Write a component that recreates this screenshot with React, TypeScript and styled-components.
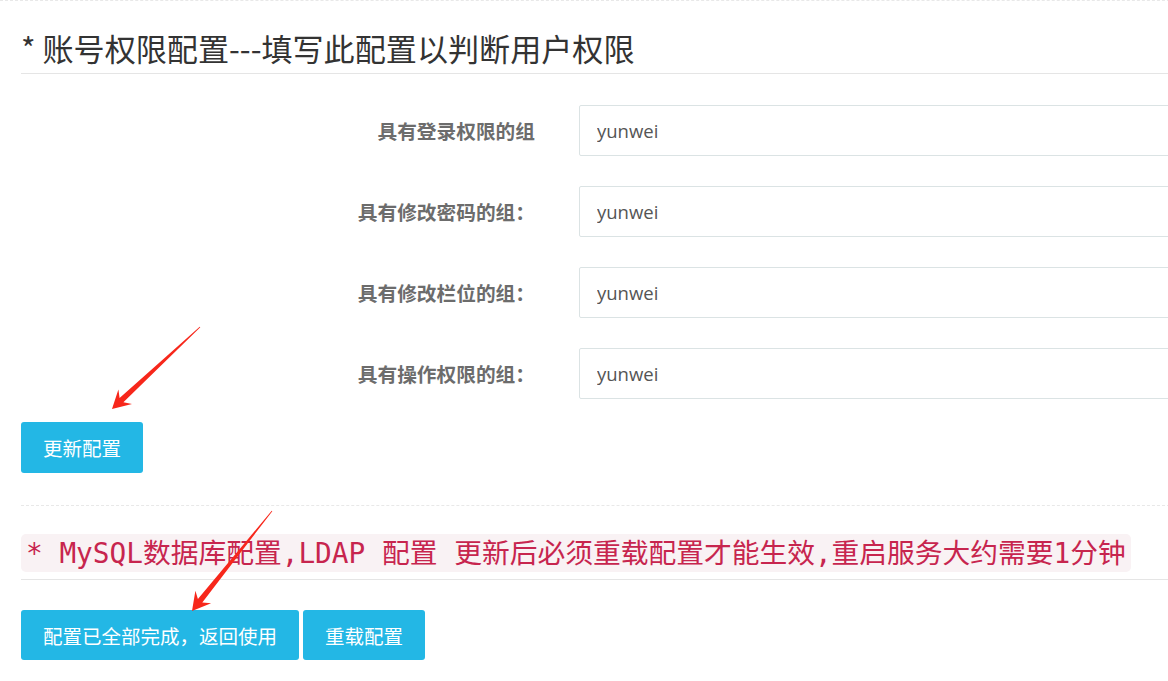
import React from "react";
import styled, { createGlobalStyle } from "styled-components";

const GlobalStyle = createGlobalStyle`
  html, body {
    margin: 0;
    padding: 0;
    background: #ffffff;
    overflow: hidden;
  }
  body {
    font-family: "Noto Sans CJK SC", "Noto Sans", sans-serif;
    color: #333333;
  }
  * { box-sizing: border-box; }
`;

const Page = styled.div`
  position: relative;
  width: 1200px;
  min-height: 681px;
`;

const TopRule = styled.div`
  border-top: 1px dashed #e8e8e8;
`;

const Content = styled.div`
  padding-left: 21px;
`;

const SectionTitle = styled.h3`
  margin: 30px 0 0;
  padding-bottom: 8px;
  font-size: 31.1px;
  line-height: 34px;
  font-weight: 400;
  color: #333333;
  border-bottom: 1px solid #e5e5e5;
`;

const Form = styled.div`
  display: flex;
  flex-direction: column;
  gap: 30px;
  margin-top: 31px;
`;

const Row = styled.div`
  display: grid;
  grid-template-columns: 514px 1fr;
  column-gap: 44px;
  align-items: center;
`;

const Label = styled.label`
  text-align: right;
  font-size: 19.7px;
  font-weight: 700;
  color: #6c6c6c;
  line-height: 24px;
  white-space: nowrap;
`;

const Input = styled.input`
  display: block;
  width: 100%;
  height: 51px;
  padding: 0 17px;
  border: 1px solid #dbe3e4;
  border-radius: 2px;
  font-family: "Open Sans", "Noto Sans", sans-serif;
  font-size: 18.5px;
  color: #555555;
  background: #ffffff;
  outline: none;
`;

const ButtonBar = styled.div<{ $top: number }>`
  display: flex;
  gap: 4px;
  margin-top: ${(p) => p.$top}px;
`;

const Button = styled.button<{ $h?: number }>`
  height: ${(p) => p.$h ?? 50}px;
  padding: 0 22px;
  border: none;
  border-radius: 3px;
  background: #23b7e5;
  color: #ffffff;
  font-family: "Noto Sans CJK SC", sans-serif;
  font-size: 19.5px;
  font-weight: 400;
  cursor: pointer;
`;

const DashedRule = styled.div`
  margin-top: 32px;
  border-top: 1px dashed #e8e8e8;
`;

const NoticeTitle = styled.h3`
  display: flex;
  margin: 28px 0 0;
  padding-bottom: 7px;
  border-bottom: 1px solid #e5e5e5;
`;

const Code = styled.code`
  display: block;
  height: 38px;
  padding: 3px 5px 1px;
  line-height: 34px;
  border-radius: 5px;
  background: #f9f2f4;
  color: #c7254e;
  font-family: "DejaVu Sans Mono", "Noto Sans CJK SC", monospace;
  font-size: 27.75px;
  font-weight: 400;
  white-space: pre;
`;

const ArrowLayer = styled.svg`
  position: absolute;
  left: 0;
  top: 0;
  width: 1200px;
  height: 681px;
  pointer-events: none;
`;

type Pt = [number, number];

function arrowPoints(tail: Pt, tip: Pt): string {
  const dx = tail[0] - tip[0];
  const dy = tail[1] - tip[1];
  const len = Math.hypot(dx, dy);
  const d: Pt = [dx / len, dy / len];
  const n: Pt = [-d[1], d[0]];
  const at = (along: number, side: number): Pt => [
    tip[0] + d[0] * along + n[0] * side,
    tip[1] + d[1] * along + n[1] * side,
  ];
  const pts: Pt[] = [
    at(len, 0.4),
    at(13, 2.8),
    at(18, 10),
    [tip[0], tip[1]],
    at(18, -10),
    at(13, -2.8),
    at(len, -0.4),
  ];
  return pts.map((p) => `${p[0].toFixed(1)},${p[1].toFixed(1)}`).join(" ");
}

const fields = [
  { label: "具有登录权限的组", value: "yunwei" },
  { label: "具有修改密码的组：", value: "yunwei" },
  { label: "具有修改栏位的组：", value: "yunwei" },
  { label: "具有操作权限的组：", value: "yunwei" },
];

export default function App() {
  return (
    <>
      <GlobalStyle />
      <Page>
        <TopRule />
        <Content>
          <SectionTitle>* 账号权限配置---填写此配置以判断用户权限</SectionTitle>
          <Form>
            {fields.map((f, i) => (
              <Row key={i}>
                <Label>{f.label}</Label>
                <Input defaultValue={f.value} />
              </Row>
            ))}
          </Form>
          <ButtonBar $top={23}>
            <Button $h={51}>更新配置</Button>
          </ButtonBar>
          <DashedRule />
          <NoticeTitle>
            <Code>* MySQL数据库配置,LDAP 配置 更新后必须重载配置才能生效,重启服务大约需要1分钟</Code>
          </NoticeTitle>
          <ButtonBar $top={30}>
            <Button>配置已全部完成，返回使用</Button>
            <Button>重载配置</Button>
          </ButtonBar>
        </Content>
        <ArrowLayer viewBox="0 0 1200 681">
          <polygon points={arrowPoints([200, 327], [112, 409])} fill="#f7271b" />
          <polygon points={arrowPoints([272, 511], [192, 611])} fill="#f7271b" />
        </ArrowLayer>
      </Page>
    </>
  );
}
